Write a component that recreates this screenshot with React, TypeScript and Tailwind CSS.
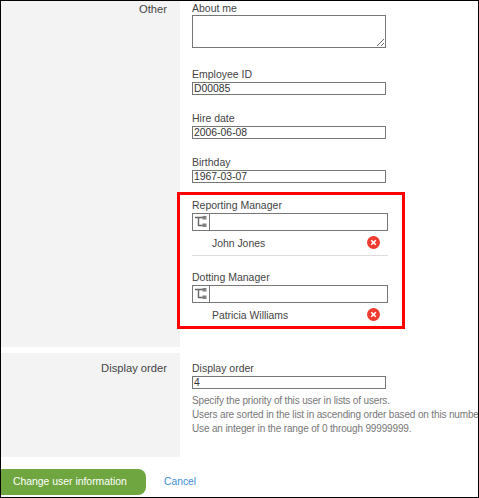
const labelClass = 'block text-[10.5px] leading-[14px] text-[#444]';
const inputClass = 'block w-[194px] h-[13px] border border-[#777] bg-white px-[1px] text-[10.4px] leading-[11px] text-[#333]';

function Field({ label, value, className }: { label: string; value: string; className: string }) {
  return (
    <div className={className}>
      <label className={labelClass}>{label}</label>
      <div className={inputClass + ' mt-[1px]'}>{value}</div>
    </div>
  );
}

function TreeIcon() {
  return (
    <svg width="12" height="12" viewBox="0 0 12 12" fill="none">
      <path d="M0 1.5H8M3.5 1.5V9.5H8" stroke="#666" strokeWidth="1.4" />
      <rect x="7.5" y="0" width="4" height="3.5" fill="#808080" />
      <rect x="7.5" y="7.5" width="4" height="3.5" fill="#808080" />
    </svg>
  );
}

function RemoveIcon() {
  return (
    <svg width="13" height="13" viewBox="0 0 13 13">
      <circle cx="6.5" cy="6.5" r="6.5" fill="#ee3a2f" />
      <path d="M4.2 4.2L8.8 8.8M8.8 4.2L4.2 8.8" stroke="#fff" strokeWidth="1.6" />
    </svg>
  );
}

function ManagerPicker({ label, name }: { label: string; name: string }) {
  return (
    <div>
      <label className={labelClass}>{label}</label>
      <div className="mt-[1px] flex h-[18px] w-[196px]">
        <button type="button" className="flex w-[18px] items-center justify-center border border-[#777] bg-white">
          <TreeIcon />
        </button>
        <div className="flex-1 border border-l-0 border-[#777] bg-white" />
      </div>
      <div className="flex h-[24px] w-[196px] items-center justify-between pb-[2px] pl-[20px] pr-[8px] text-[10.4px] text-[#444]">
        <span className="pt-[3px]">{name}</span>
        <RemoveIcon />
      </div>
    </div>
  );
}

export default function App() {
  return (
    <div
      className="relative h-[498px] w-[479px] overflow-hidden border border-black bg-white"
      style={{ fontFamily: '"Liberation Sans", Arial, sans-serif' }}
    >
      {/* Other */}
      <div className="flex h-[346px]">
        <div className="w-[179px] shrink-0 bg-[#f3f3f3] pr-[13px] pt-[1px] text-right text-[11.2px] leading-[14px] text-[#444]">
          Other
        </div>
        <div className="flex-1 pl-[12px]">
          <label className={labelClass}>About me</label>
          <textarea className="block h-[33px] w-[194px] resize-y border border-[#777] bg-white" />
          <Field className="mt-[19px]" label="Employee ID" value="D00085" />
          <Field className="mt-[16px]" label="Hire date" value="2006-06-08" />
          <Field className="mt-[16px]" label="Birthday" value="1967-03-07" />
          <div className="mt-[15px]">
            <ManagerPicker label="Reporting Manager" name="John Jones" />
            <div className="mb-[14px] h-[1px] w-[196px] bg-[#ddd]" />
            <ManagerPicker label="Dotting Manager" name="Patricia Williams" />
          </div>
        </div>
      </div>

      {/* Display order */}
      <div className="mt-[6px] flex h-[104px]">
        <div className="w-[179px] shrink-0 bg-[#f3f3f3] pr-[13px] pt-[8px] text-right text-[11.2px] leading-[14px] text-[#444]">
          Display order
        </div>
        <div className="min-w-0 flex-1 overflow-hidden pl-[12px] pt-[8px]">
          <Field className="" label="Display order" value="4" />
          <div className="mt-[5px] whitespace-nowrap text-[10px] leading-[14px] tracking-[-0.15px] text-[#777]">
            <p>Specify the priority of this user in lists of users.</p>
            <p>Users are sorted in the list in ascending order based on this number.</p>
            <p>Use an integer in the range of 0 through 99999999.</p>
          </div>
        </div>
      </div>

      {/* Actions */}
      <div className="mt-[12px] flex items-center">
        <button
          type="button"
          className="h-[26px] w-[145px] rounded-r-[8px] bg-[#6fa63f] pl-[12px] text-left text-[10.4px] font-normal text-white"
        >
          Change user information
        </button>
        <a className="ml-[18px] text-[10.3px] text-[#3b8fd8]">Cancel</a>
      </div>

      {/* annotation over the manager fields */}
      <div className="pointer-events-none absolute left-[176px] top-[191px] h-[137px] w-[228px] border-[3px] border-[#f00]" />
    </div>
  );
}
